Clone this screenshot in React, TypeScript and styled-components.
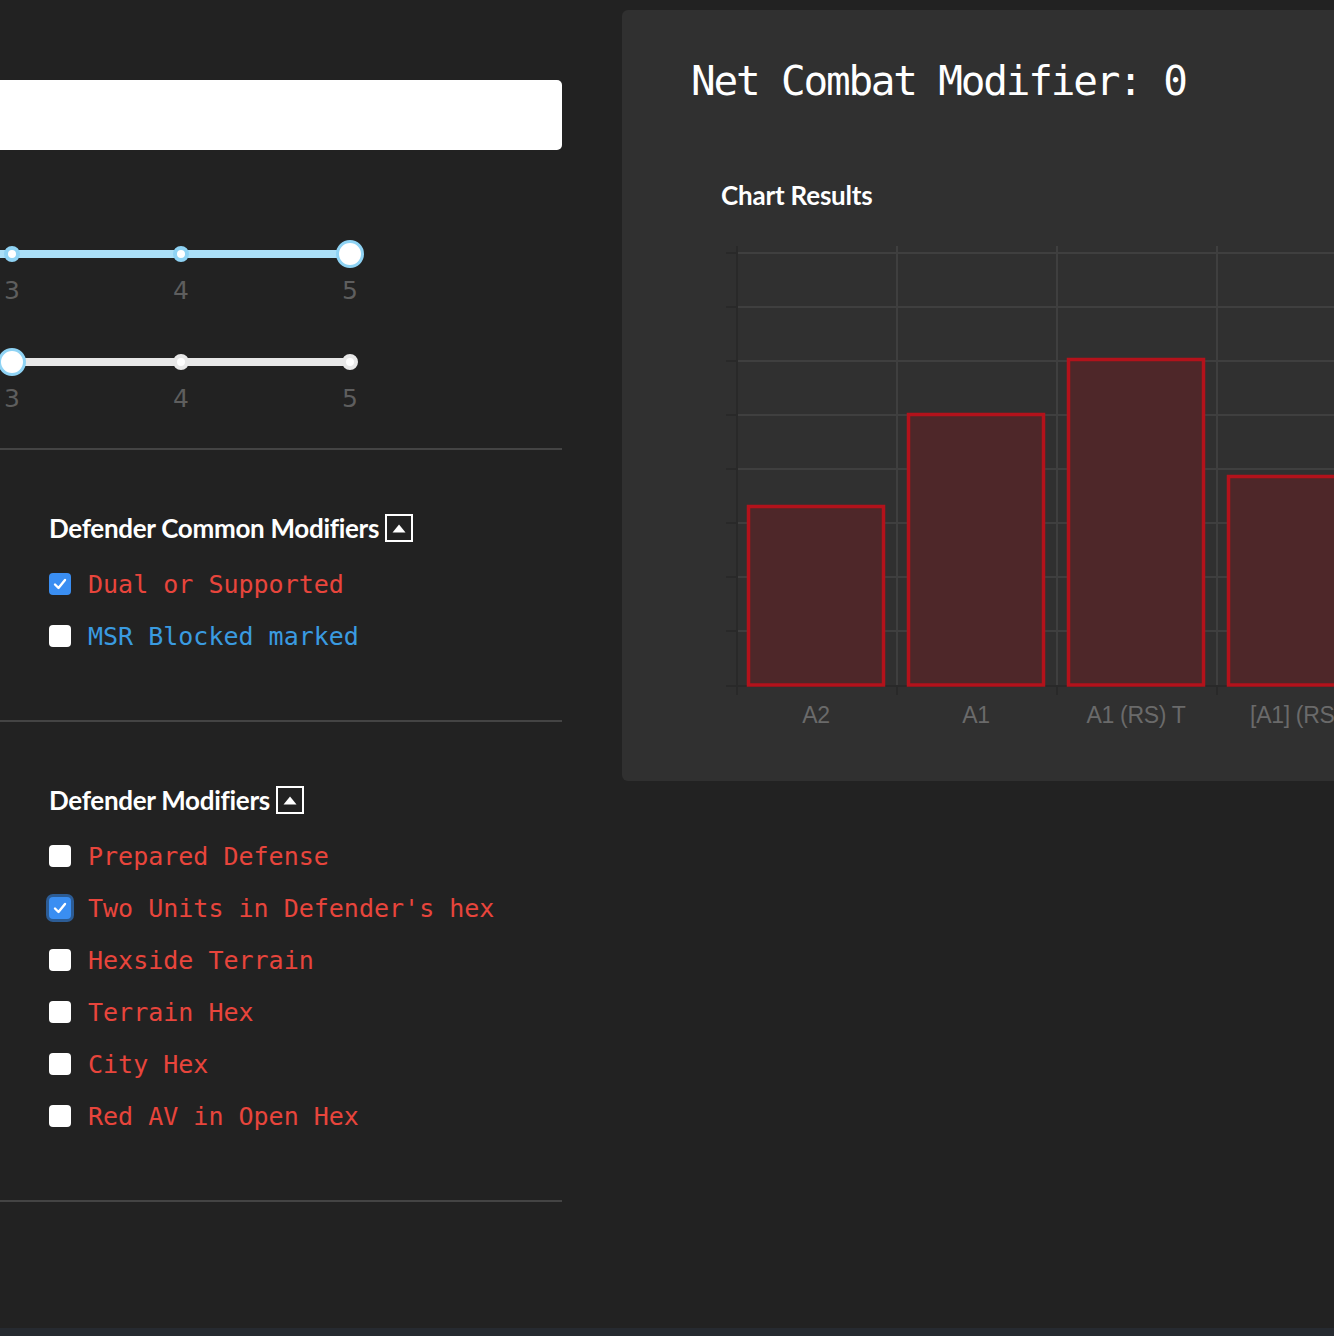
import React from "react";
import styled, { createGlobalStyle } from "styled-components";

const GlobalStyle = createGlobalStyle`
  html, body { margin: 0; padding: 0; background: #262a30; }
  body { font-family: Lato, "Open Sans", sans-serif; }
  * { box-sizing: border-box; }
`;

const Page = styled.div`
  display: flex;
  align-items: flex-start;
  width: 1334px;
  min-height: 1328px;
  background: #222222;
  overflow: hidden;
`;

const LeftColumn = styled.div`
  width: 562px;
  flex-shrink: 0;
  padding-top: 80px;
`;

const TextInput = styled.input`
  display: block;
  width: 602px;
  height: 70px;
  margin-left: -40px;
  border: none;
  border-radius: 5px;
  background: #ffffff;
  outline: none;
`;

const SliderGroup = styled.div`
  padding-top: 90px;
  display: flex;
  flex-direction: column;
  gap: 34px;
`;

const SliderWrap = styled.div`
  margin-left: 12px;
  width: 338px;
`;

const TrackArea = styled.div`
  position: relative;
  height: 28px;
`;

const Track = styled.div<{ $color: string }>`
  position: absolute;
  left: -12px;
  right: 0;
  top: 10px;
  height: 8px;
  background: ${(p) => p.$color};
`;

const Dot = styled.div<{ $ring: string; $big?: boolean }>`
  position: absolute;
  top: 14px;
  width: ${(p) => (p.$big ? "28px" : "16px")};
  height: ${(p) => (p.$big ? "28px" : "16px")};
  border-radius: 50%;
  background: #ffffff;
  border: ${(p) => (p.$big ? "3px" : "4px")} solid ${(p) => p.$ring};
  transform: translate(-50%, -50%);
`;

const LabelRow = styled.div`
  display: flex;
  justify-content: space-between;
  height: 46px;
  line-height: 46px;
`;

const TickLabel = styled.span`
  width: 0;
  display: flex;
  justify-content: center;
  font-family: "DejaVu Sans", sans-serif;
  font-size: 25px;
  color: #5e5e5e;
`;

const Divider = styled.hr<{ $top: number }>`
  margin: ${(p) => p.$top}px 0 0 0;
  border: none;
  height: 2px;
  background: #444444;
`;

const Section = styled.section`
  padding: 62px 0 0 49px;
`;

const SectionHeader = styled.h3`
  display: flex;
  align-items: center;
  gap: 6px;
  margin: 0 0 14px 0;
  height: 32px;
  font-family: Lato, sans-serif;
  font-weight: 700;
  font-size: 26px;
  letter-spacing: -0.3px;
  color: #ffffff;
`;

const ToggleBox = styled.span`
  display: inline-flex;
  align-items: center;
  justify-content: center;
  width: 28px;
  height: 28px;
  border: 2px solid #ffffff;
`;

const Row = styled.label`
  display: flex;
  align-items: center;
  gap: 17px;
  height: 52px;
`;

const Box = styled.span<{ $checked?: boolean; $focus?: boolean }>`
  display: inline-flex;
  align-items: center;
  justify-content: center;
  width: 22px;
  height: 22px;
  border-radius: 4px;
  background: ${(p) => (p.$checked ? "#3a8ef2" : "#ffffff")};
  box-shadow: ${(p) => (p.$focus ? "0 0 0 3px #2c5c95" : "none")};
`;

const RowText = styled.span<{ $color: string }>`
  font-family: "DejaVu Sans Mono", "Liberation Mono", monospace;
  font-size: 25px;
  color: ${(p) => p.$color};
`;

const Panel = styled.div`
  flex: 0 0 800px;
  margin: 10px 0 0 60px;
  height: 771px;
  background: #303030;
  border-radius: 6px;
  padding: 48px 0 0 69px;
`;

const Title = styled.h1`
  margin: 0;
  height: 46px;
  line-height: 46px;
  font-family: "DejaVu Sans Mono", "Liberation Mono", monospace;
  font-weight: 400;
  font-size: 41px;
  letter-spacing: -2.2px;
  color: #ffffff;
`;

const ChartTitle = styled.h2`
  margin: 75px 0 0 30px;
  height: 32px;
  line-height: 32px;
  font-family: Lato, sans-serif;
  font-weight: 700;
  font-size: 26px;
  letter-spacing: -0.2px;
  color: #ffffff;
`;

const ChartSvg = styled.svg`
  display: block;
  margin: 29px 0 0 9px;
`;

const Slider = ({ track, ring, active }: { track: string; ring: string; active: number }) => {
  const stops = [3, 4, 5];
  return (
    <SliderWrap>
      <TrackArea>
        <Track $color={track} />
        {stops.map((s, i) =>
          s === active ? null : (
            <Dot key={s} $ring={ring} style={{ left: `${i * 50}%` }} />
          )
        )}
        <Dot $big $ring="#8fd3f4" style={{ left: `${stops.indexOf(active) * 50}%` }} />
      </TrackArea>
      <LabelRow>
        {stops.map((s) => (
          <TickLabel key={s}>{s}</TickLabel>
        ))}
      </LabelRow>
    </SliderWrap>
  );
};

const Check = () => (
  <svg width="14" height="12" viewBox="0 0 14 12">
    <path d="M2 6.5 L5.5 10 L12 2" fill="none" stroke="#ffffff" strokeWidth="2.4" strokeLinecap="round" strokeLinejoin="round" />
  </svg>
);

const Toggle = () => (
  <ToggleBox>
    <svg width="14" height="9" viewBox="0 0 14 9">
      <path d="M7 0.5 L13.5 8.5 L0.5 8.5 Z" fill="#ffffff" />
    </svg>
  </ToggleBox>
);

type Item = { label: string; checked?: boolean; focus?: boolean; color?: string };

const RED = "#e8453c";
const BLUE = "#3a9be0";

const CheckRow = ({ item }: { item: Item }) => (
  <Row>
    <Box $checked={item.checked} $focus={item.focus}>
      {item.checked && <Check />}
    </Box>
    <RowText $color={item.color || RED}>{item.label}</RowText>
  </Row>
);

const common: Item[] = [
  { label: "Dual or Supported", checked: true },
  { label: "MSR Blocked marked", color: BLUE },
];

const defender: Item[] = [
  { label: "Prepared Defense" },
  { label: "Two Units in Defender's hex", checked: true, focus: true },
  { label: "Hexside Terrain" },
  { label: "Terrain Hex" },
  { label: "City Hex" },
  { label: "Red AV in Open Hex" },
];

const bars = [
  { label: "A2", top: 265 },
  { label: "A1", top: 173 },
  { label: "A1 (RS) T", top: 118 },
  { label: "[A1] (RS)", top: 235 },
];

const Chart = () => {
  const gridY = [13, 67, 121, 175, 229, 283, 337, 391];
  const gridX = [197, 357, 517];
  return (
    <ChartSvg width="720" height="500" viewBox="0 0 720 500">
      {gridY.map((y) => (
        <g key={y}>
          <line x1={37} x2={720} y1={y} y2={y} stroke="#3f3f3f" strokeWidth={2} />
          <line x1={26} x2={37} y1={y} y2={y} stroke="#292929" strokeWidth={2} />
        </g>
      ))}
      {gridX.map((x) => (
        <line key={x} x1={x} x2={x} y1={6} y2={446} stroke="#3f3f3f" strokeWidth={2} />
      ))}
      <line x1={37} x2={37} y1={6} y2={455} stroke="#292929" strokeWidth={2} />
      <line x1={26} x2={720} y1={446} y2={446} stroke="#292929" strokeWidth={2} />
      {[37, 197, 357, 517].map((x) => (
        <line key={x} x1={x} x2={x} y1={446} y2={455} stroke="#292929" strokeWidth={2} />
      ))}
      {bars.map((b, i) => {
        const x = 47 + i * 160;
        return (
          <g key={b.label}>
            <rect x={x + 1.5} y={b.top + 1.5} width={135} height={445 - b.top - 1.5} fill="#4e2729" stroke="#b3121b" strokeWidth={3.5} />
            <text x={x + 69} y={483} textAnchor="middle" fontFamily="'Liberation Sans', Arial, sans-serif" fontSize="23" fill="#6a6a6a" letterSpacing="-0.3">
              {b.label}
            </text>
          </g>
        );
      })}
    </ChartSvg>
  );
};

export default function App() {
  return (
    <>
      <GlobalStyle />
      <Page>
        <LeftColumn>
          <TextInput type="text" readOnly />
          <SliderGroup>
            <Slider track="#abe0f8" ring="#8fd3f4" active={5} />
            <Slider track="#e8e8e8" ring="#e8e8e8" active={3} />
          </SliderGroup>
          <Divider $top={26} />
          <Section>
            <SectionHeader>
              Defender Common Modifiers
              <Toggle />
            </SectionHeader>
            {common.map((it) => (
              <CheckRow key={it.label} item={it} />
            ))}
          </Section>
          <Divider $top={58} />
          <Section>
            <SectionHeader>
              Defender Modifiers
              <Toggle />
            </SectionHeader>
            {defender.map((it) => (
              <CheckRow key={it.label} item={it} />
            ))}
          </Section>
          <Divider $top={58} />
        </LeftColumn>
        <Panel>
          <Title>Net Combat Modifier: 0</Title>
          <ChartTitle>Chart Results</ChartTitle>
          <Chart />
        </Panel>
      </Page>
    </>
  );
}
